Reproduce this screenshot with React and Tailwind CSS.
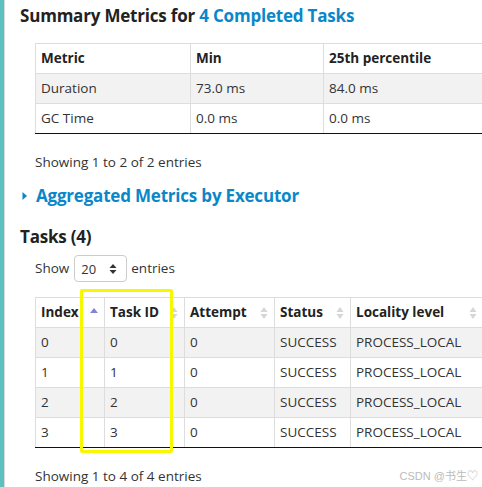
import React from 'react';

const font = { fontFamily: '"Open Sans", "Noto Sans", sans-serif' };

// Double sort arrows in table headers.
const SortIcon = ({ active }) => (
  <svg width="8" height="16" viewBox="0 0 8 16" className="absolute right-[6px] top-1/2 -translate-y-1/2">
    {active ? (
      <path d="M0 8 L4 3 L8 8 Z" fill="#8383dc" />
    ) : (
      <>
        <path d="M0.5 7 L4 2 L7.5 7 Z" fill="#d6d6d6" />
        <path d="M0.5 9 L4 14 L7.5 9 Z" fill="#d6d6d6" />
      </>
    )}
  </svg>
);

const summaryRows = [
  ['Duration', '73.0 ms', '84.0 ms'],
  ['GC Time', '0.0 ms', '0.0 ms'],
];

const taskCols = [
  { label: 'Index', w: 69, active: true },
  { label: 'Task ID', w: 80 },
  { label: 'Attempt', w: 90 },
  { label: 'Status', w: 76 },
  { label: 'Locality level', w: 133 },
];

const tasks = [0, 1, 2, 3];

export default function App() {
  return (
    <div className="relative w-[482px] h-[487px] overflow-hidden bg-white text-[#333] flex" style={font}>
      <div className="w-[4px] shrink-0 bg-[#5cc1bf]" />
      <div className="w-px shrink-0 bg-[#d8d8d8]" />
      <div className="flex-1 min-w-0 pl-[15px] pt-[3px]">
        <h2 className="text-[17px] font-bold leading-[26px] text-[#222] tracking-[-0.2px]">
          Summary Metrics for <span className="text-[#0a87c9]">4 Completed Tasks</span>
        </h2>

        <div className="ml-[15px] mt-[14px] overflow-hidden">
          <table className="border-collapse text-[13.5px] w-[600px] table-fixed">
            <colgroup>
              <col style={{ width: 155 }} />
              <col style={{ width: 133 }} />
              <col />
            </colgroup>
            <thead>
              <tr className="h-[30px]">
                {['Metric', 'Min', '25th percentile'].map((h) => (
                  <th key={h} className="border border-[#ddd] text-left font-bold px-[5px] text-[#222]">{h}</th>
                ))}
              </tr>
            </thead>
            <tbody>
              {summaryRows.map((r, i) => (
                <tr key={r[0]} className={`h-[30px] ${i % 2 === 0 ? 'bg-[#f2f2f2]' : 'bg-white'}`}>
                  {r.map((c, j) => (
                    <td key={j} className={`border-x border-t border-[#ddd] px-[5px] ${i === summaryRows.length - 1 ? 'border-b border-b-[#111]' : 'border-b'}`}>{c}</td>
                  ))}
                </tr>
              ))}
            </tbody>
          </table>
          <div className="text-[13.5px] mt-[18px] leading-[20px]">Showing 1 to 2 of 2 entries</div>
        </div>

        <div className="flex items-center mt-[11px] h-[26px]">
          <svg width="6" height="10" viewBox="0 0 6 10" className="ml-[2px] mr-[8px]">
            <path d="M0.5 1 L5 5 L0.5 9 Z" fill="#0a87c9" />
          </svg>
          <span className="text-[17px] font-bold text-[#0a87c9] tracking-[-0.2px]">Aggregated Metrics by Executor</span>
        </div>

        <h2 className="text-[17px] font-bold leading-[26px] text-[#222] mt-[15px] tracking-[-0.2px]">Tasks (4)</h2>

        <div className="ml-[15px] mt-[5px] flex items-center text-[13.5px]">
          <span>Show</span>
          <div className="ml-[5px] mr-[4px] w-[53px] h-[27px] border border-[#ccc] rounded-[4px] flex items-center justify-between pl-[6px] pr-[9px]">
            <span className="text-[13px] mt-[2px]">20</span>
            <svg width="8" height="12" viewBox="0 0 8 12">
              <path d="M0.5 5 L4 1 L7.5 5 Z" fill="#333" />
              <path d="M0.5 7 L4 11 L7.5 7 Z" fill="#333" />
            </svg>
          </div>
          <span>entries</span>
        </div>

        <div className="ml-[15px] mt-[15px] overflow-hidden">
          <table className="border-collapse text-[13.5px] w-[600px] table-fixed">
            <colgroup>
              {taskCols.map((c) => <col key={c.label} style={{ width: c.w }} />)}
              <col />
            </colgroup>
            <thead>
              <tr className="h-[30px]">
                {taskCols.map((c) => (
                  <th key={c.label} className="relative border border-[#ddd] text-left font-bold px-[5px] text-[#222]">
                    {c.label}
                    <SortIcon active={c.active} />
                  </th>
                ))}
                <th className="border border-[#ddd]" />
              </tr>
            </thead>
            <tbody>
              {tasks.map((t, i) => (
                <tr key={t} className={`h-[30px] ${i % 2 === 0 ? 'bg-[#f2f2f2]' : 'bg-white'}`}>
                  {[t, t, 0, 'SUCCESS', 'PROCESS_LOCAL', ''].map((c, j) => (
                    <td key={j} className={`border-x border-t border-[#ddd] px-[5px] ${i === tasks.length - 1 ? 'border-b border-b-[#111]' : 'border-b'}`}>{c}</td>
                  ))}
                </tr>
              ))}
            </tbody>
          </table>
          <div className="flex items-center justify-between mt-[18px] leading-[20px]">
            <span className="text-[13.5px]">Showing 1 to 4 of 4 entries</span>
            <span className="text-[11px] text-[#bbb] mr-[4px]" style={{ fontFamily: '"Liberation Sans", "Noto Sans CJK SC", sans-serif' }}>CSDN @书生♡</span>
          </div>
        </div>
      </div>

      {/* highlight box drawn over the Task ID column */}
      <div className="absolute left-[80px] top-[289px] w-[93px] h-[164px] border-[3px] border-[#f7f700] rounded-[2px] pointer-events-none" />
    </div>
  );
}
